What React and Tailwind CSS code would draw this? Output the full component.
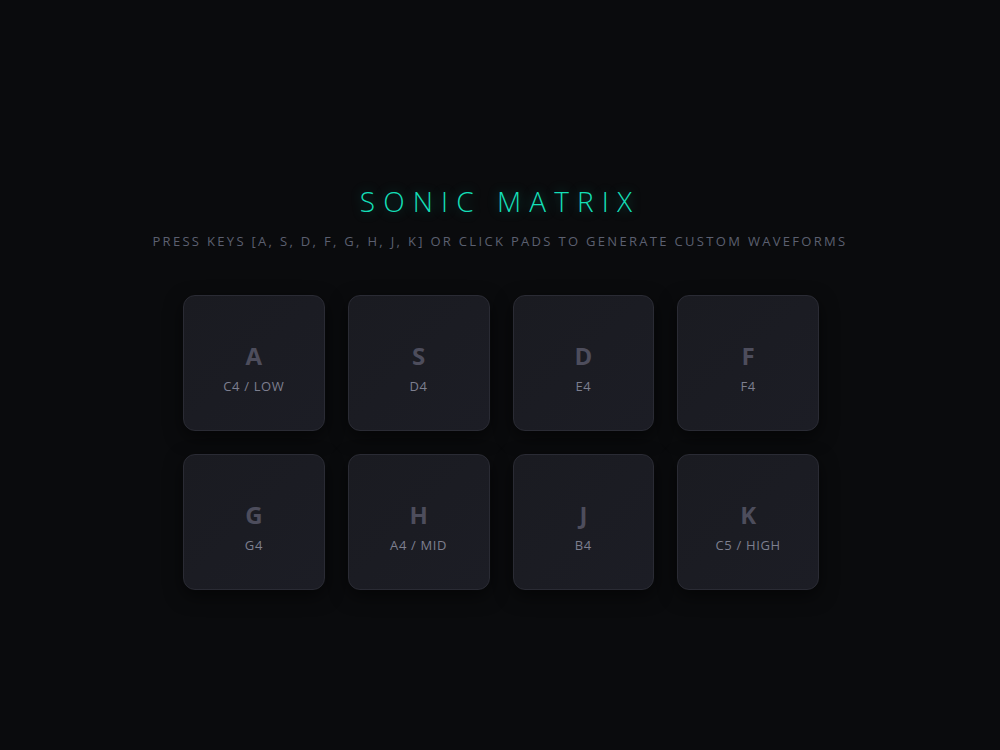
const PADS = [
  { key: 'A', note: 'C4 / LOW' },
  { key: 'S', note: 'D4' },
  { key: 'D', note: 'E4' },
  { key: 'F', note: 'F4' },
  { key: 'G', note: 'G4' },
  { key: 'H', note: 'A4 / MID' },
  { key: 'J', note: 'B4' },
  { key: 'K', note: 'C5 / HIGH' },
]

function Pad({ k, note }) {
  return (
    <button className="h-[136px] rounded-xl border border-[#2a2b34] bg-gradient-to-br from-[#1a1b21] to-[#1c1d25] shadow-[0_6px_18px_rgba(0,0,0,0.55)] flex flex-col items-center justify-center pt-[11px] cursor-pointer">
      <span className="text-[24px] font-bold leading-none text-[#4d4d5c]">{k}</span>
      <span className="mt-[12px] text-[13px] leading-none tracking-[0.05em] text-[#7d7f8f]">{note}</span>
    </button>
  )
}

export default function App() {
  return (
    <div className="min-h-screen w-full bg-[#0a0b0d] font-['Open_Sans','Noto_Sans',sans-serif] flex flex-col items-center pt-[187px]">
      <h1 className="text-[28px] font-light leading-none tracking-[0.29em] text-[#14dfb7] [text-shadow:0_0_12px_rgba(20,223,183,0.35)]">
        SONIC MATRIX
      </h1>
      <p className="mt-[20px] text-[13px] leading-none tracking-[0.178em] text-[#5c6070]">
        PRESS KEYS [A, S, D, F, G, H, J, K] OR CLICK PADS TO GENERATE CUSTOM WAVEFORMS
      </p>
      <div className="mt-[47px] grid grid-cols-4 gap-[23px] w-[636px] ml-[2px]">
        {PADS.map((p) => (
          <Pad key={p.key} k={p.key} note={p.note} />
        ))}
      </div>
    </div>
  )
}
